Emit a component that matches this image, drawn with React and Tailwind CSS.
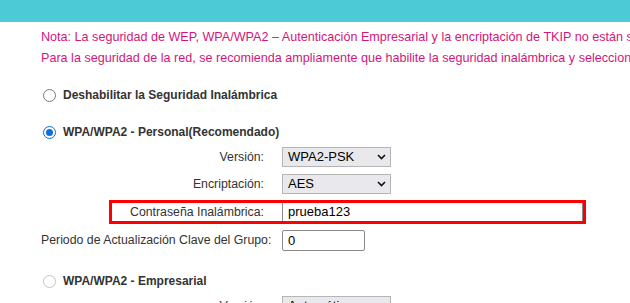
import React from "react";

function Chevron() {
  return (
    <svg width="9" height="6" viewBox="0 0 9 6" className="shrink-0">
      <path d="M1 1 L4.5 4.5 L8 1" fill="none" stroke="#111" strokeWidth="1.6" />
    </svg>
  );
}

function Radio({ checked, disabled }) {
  if (checked) {
    return (
      <span className="w-[13px] h-[13px] rounded-full border-[1.5px] border-[#0b6fe0] flex items-center justify-center shrink-0">
        <span className="w-[7px] h-[7px] rounded-full bg-[#0b6fe0]" />
      </span>
    );
  }
  return (
    <span
      className={
        disabled
          ? "w-[13px] h-[13px] rounded-full border border-[#c4c4c4] shrink-0"
          : "w-[13px] h-[13px] rounded-full border-[1.5px] border-[#7a7a7a] shrink-0"
      }
    />
  );
}

function Select({ value }) {
  return (
    <div className="w-[109px] h-[20px] bg-[#e9e9ed] border border-[#b5b5b5] flex items-center justify-between pl-[5px] pr-[4px] text-[13px] text-black whitespace-nowrap overflow-hidden">
      <span>{value}</span>
      <Chevron />
    </div>
  );
}

export default function App() {
  return (
    <div className="w-[630px] h-[303px] overflow-hidden bg-white font-['Liberation_Sans',Arial,sans-serif] text-[12.3px] text-[#333]">
      <div className="h-[22px] bg-[#4ccad6]" />

      <div className="mt-[5px] pl-[41px] text-[12.6px] leading-[21px] text-[#d2167a] whitespace-nowrap">
        <p>Nota: La seguridad de WEP, WPA/WPA2 – Autenticación Empresarial y la encriptación de TKIP no están soportadas por WPS.</p>
        <p>Para la seguridad de la red, se recomienda ampliamente que habilite la seguridad inalámbrica y seleccione WPA2-PSK.</p>
      </div>

      <div className="mt-[16px] h-[20px] pl-[43px] flex items-center gap-[7px] text-[12px] font-bold whitespace-nowrap">
        <Radio />
        <span>Deshabilitar la Seguridad Inalámbrica</span>
      </div>

      <div className="mt-[17px] h-[20px] pl-[43px] flex items-center gap-[7px] text-[12px] font-bold whitespace-nowrap">
        <Radio checked />
        <span>WPA/WPA2 - Personal(Recomendado)</span>
      </div>

      <div className="mt-[5px] h-[20px] flex items-center">
        <span className="w-[264px] text-right">Versión:</span>
        <div className="ml-[18px]">
          <Select value="WPA2-PSK" />
        </div>
      </div>

      <div className="mt-[7px] h-[20px] flex items-center">
        <span className="w-[264px] text-right">Encriptación:</span>
        <div className="ml-[18px]">
          <Select value="AES" />
        </div>
      </div>

      <div className="mt-[6px] ml-[109px] w-[477px] h-[24px] border-[3px] border-[#ff0000] flex items-center">
        <span className="w-[152px] text-right whitespace-nowrap">Contraseña Inalámbrica:</span>
        <div className="ml-[18px] flex-1 h-[18px] border-x border-[#8a8a8a] flex items-center pl-[5px] text-[13px] text-black">
          prueba123
        </div>
      </div>

      <div className="mt-[6px] h-[21px] flex items-center">
        <span className="w-[282px] pl-[41px] whitespace-nowrap">Periodo de Actualización Clave del Grupo:</span>
        <div className="w-[83px] h-[21px] border border-[#8a8a8a] rounded-[2px] flex items-center pl-[5px] text-[13px] text-black">
          0
        </div>
      </div>

      <div className="mt-[20px] h-[20px] pl-[43px] flex items-center gap-[7px] text-[12px] font-bold whitespace-nowrap">
        <Radio disabled />
        <span>WPA/WPA2 - Empresarial</span>
      </div>

      <div className="mt-[5px] h-[20px] flex items-center">
        <span className="w-[264px] text-right">Versión:</span>
        <div className="ml-[18px]">
          <Select value="Automático" />
        </div>
      </div>
    </div>
  );
}
